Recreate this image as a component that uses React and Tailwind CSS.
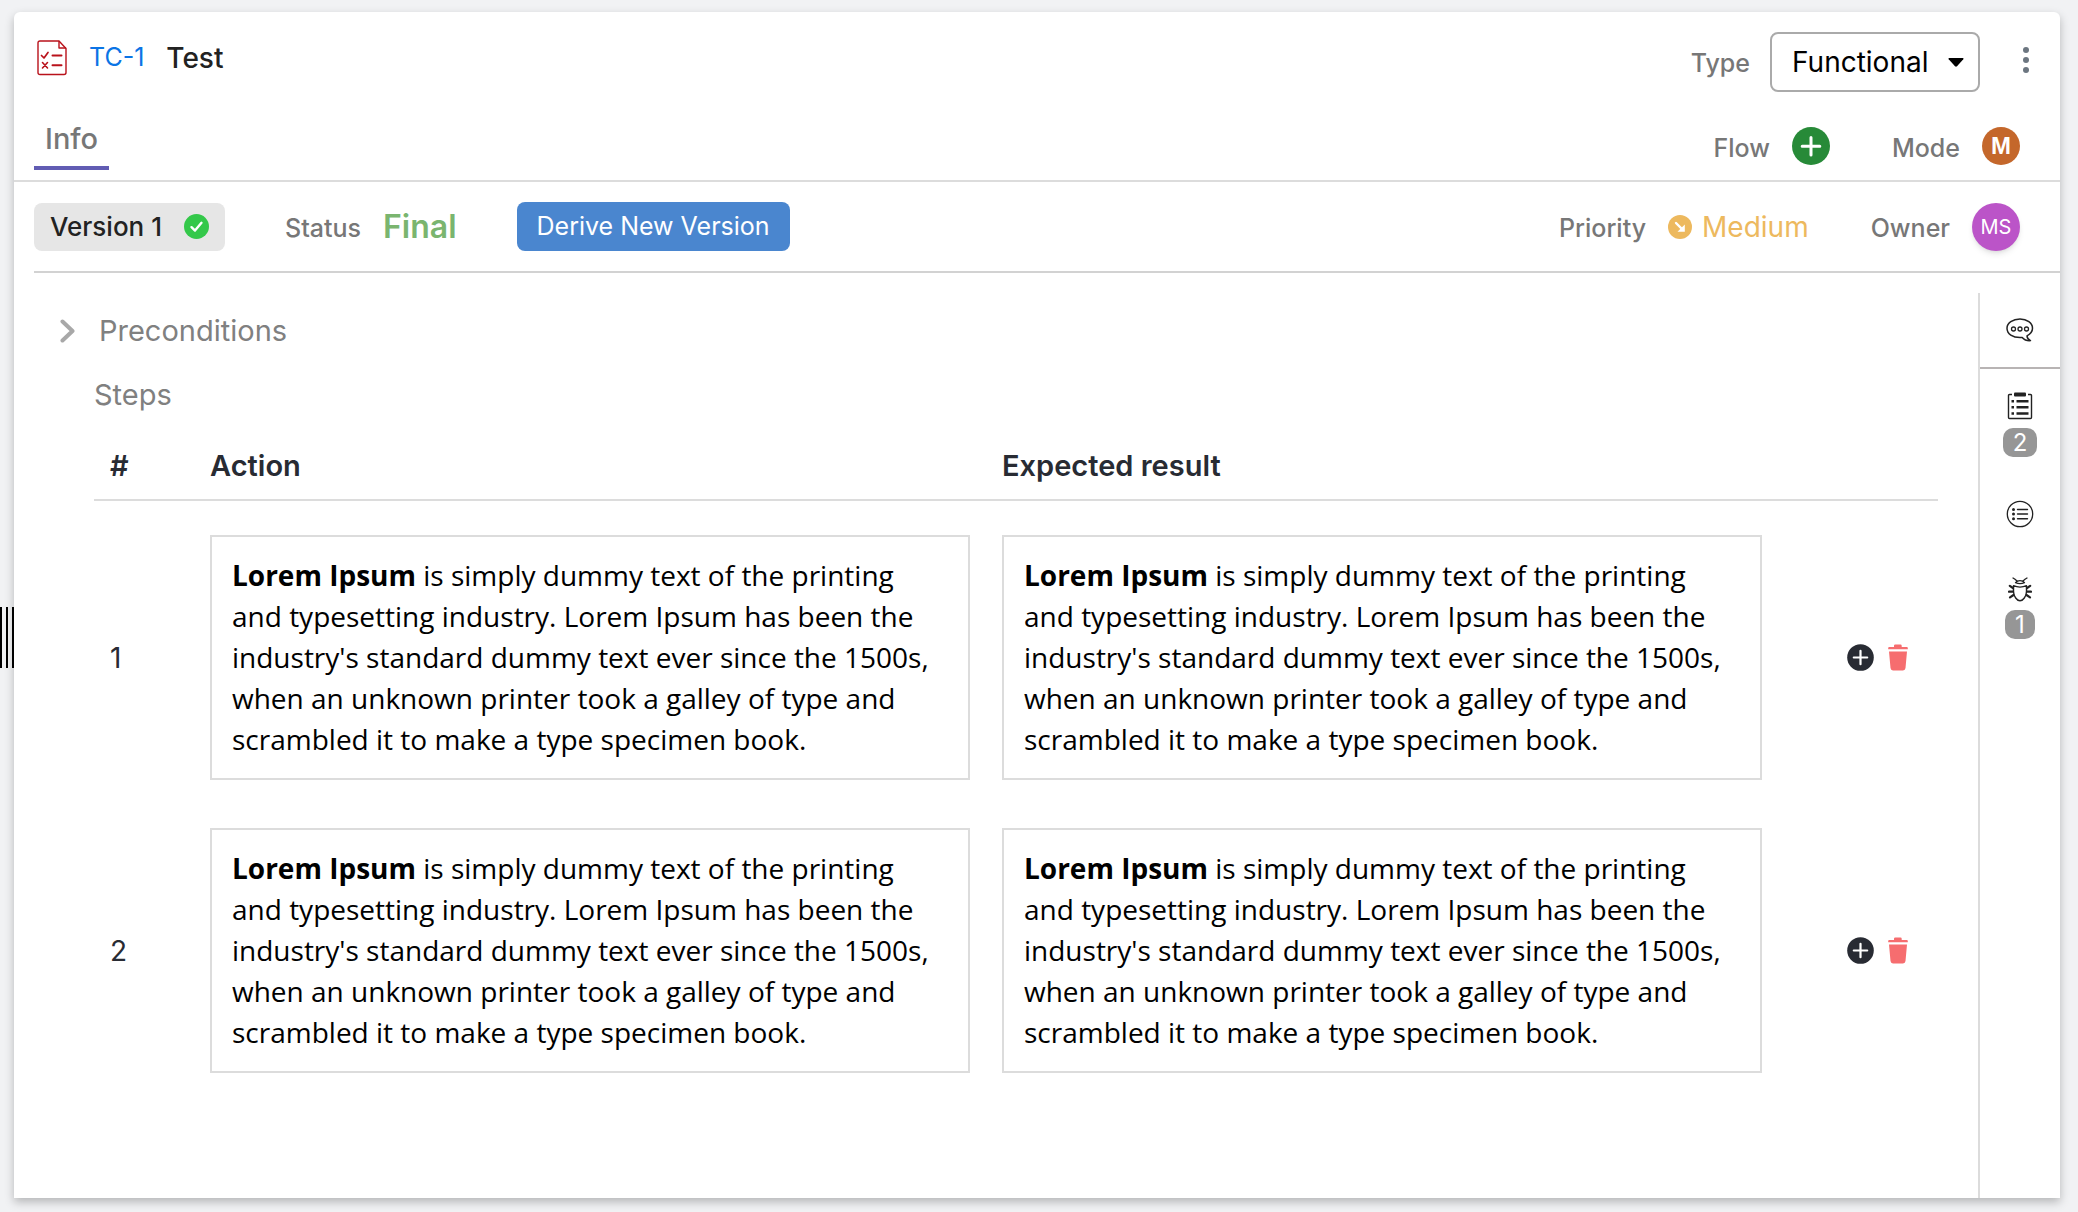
import React, { useState } from "react";

const LABEL = "pt-1 text-[25px] font-medium text-[#777777]";

const TestCaseIcon = () => (
  <svg width="30" height="36" viewBox="0 0 30 36" fill="none" stroke="#b9121b" strokeLinecap="round" strokeLinejoin="round">
    <path d="M3 1H22L29 8.500V32.500Q29 34.500 27 34.500H3Q1 34.500 1 32.500V3Q1 1 3 1Z" strokeWidth="1.400" />
    <path d="M22 1.500V8H28.500" strokeWidth="1.400" />
    <path d="M4.500 15.500L7 18L11 12.500" strokeWidth="1.700" />
    <path d="M5.500 22.500L10.500 28M10.500 22.500L5.500 28" strokeWidth="1.600" />
    <path d="M15.500 15.500H24.500M15.500 25.200H24.500" strokeWidth="2" />
  </svg>
);

const CheckIcon = () => (
  <svg width="25" height="25" viewBox="0 0 25 25" fill="none">
    <circle cx="12.500" cy="12.500" r="12.500" fill="#34c84a" />
    <path d="M7.500 13.200L11 16.600L17.500 8.800" stroke="white" strokeWidth="2.400" strokeLinecap="round" strokeLinejoin="round" />
  </svg>
);

const PriorityIcon = () => (
  <svg width="24" height="24" viewBox="0 0 24 24" fill="none">
    <circle cx="12" cy="12" r="12" fill="#edb95e" />
    <path d="M8 8L13.500 13.500" stroke="white" strokeWidth="2.400" strokeLinecap="round" />
    <path d="M16.800 9.500V16.800H9.500Z" fill="white" />
  </svg>
);

const CommentIcon = () => (
  <svg width="28" height="24" viewBox="0 0 28 24" fill="none" stroke="#222222" strokeWidth="1.500" strokeLinejoin="round">
    <path d="M14 1C21 1 26.500 5 26.500 10.200C26.500 13.500 24.400 16 21 17.800C21 19.800 22.500 21.600 24.500 22.600C21 22.900 18 21.500 16.200 19.400C15.500 19.500 14.700 19.500 14 19.500C6.800 19.500 1 16 1 10.200C1 5 6.800 1 14 1Z" />
    <circle cx="7.500" cy="11" r="2" strokeWidth="1.300" />
    <circle cx="14" cy="11" r="2" strokeWidth="1.300" />
    <circle cx="20.500" cy="11" r="2" strokeWidth="1.300" />
  </svg>
);

const ClipboardIcon = () => (
  <svg width="26" height="28" viewBox="0 0 26 28" fill="none" stroke="#222222">
    <path d="M5 2.500H2.500Q1.500 2.500 1.500 3.500V25.500Q1.500 26.500 2.500 26.500H23.500Q24.500 26.500 24.500 25.500V3.500Q24.500 2.500 23.500 2.500H21" strokeWidth="1.400" />
    <rect x="7" y="0.500" width="12" height="4" rx="1" fill="#222222" stroke="none" />
    <path d="M4.500 9.300H7M4.500 15.300H7M4.500 21.500H7" strokeWidth="2.400" />
    <path d="M9.500 9.300H21.500M9.500 15.300H21.500M9.500 21.500H21.500" strokeWidth="2.400" />
  </svg>
);

const ListCircleIcon = () => (
  <svg width="28" height="28" viewBox="0 0 28 28" fill="none" stroke="#222222">
    <circle cx="14" cy="14" r="12.700" strokeWidth="1.300" />
    <path d="M11.500 9.500H21.500M11.500 14H21.500M11.500 18.700H21.500" strokeWidth="1.400" strokeLinecap="round" />
    <g fill="#222222" stroke="none">
      <circle cx="7.500" cy="9.500" r="1.500" />
      <circle cx="7.500" cy="14" r="1.500" />
      <circle cx="7.500" cy="18.700" r="1.500" />
    </g>
  </svg>
);

const BugIcon = () => (
  <svg width="24" height="25" viewBox="0 0 24 25" fill="none" stroke="#222222" strokeLinecap="round" strokeLinejoin="round">
    <path d="M5 1L7 2.300L9 4M19 1L17 2.300L15 4" strokeWidth="1.300" />
    <path d="M7.500 5.600Q9 3.600 12 3.600Q15 3.600 16.500 5.600Q12 7.600 7.500 5.600Z" strokeWidth="1.300" />
    <path d="M5.500 8.700Q12 11.500 18.500 8.700V14.500Q18.500 18 16.300 21Q14.500 23.700 12 23.700Q9.500 23.700 7.700 21Q5.500 18 5.500 14.500Z" strokeWidth="1.400" />
    <path d="M5 11L1.800 8.800M5 14.700H1M5.500 18L2 20.300M19 11L22.200 8.800M19 14.700H23M18.500 18L22 20.300" strokeWidth="2.200" />
  </svg>
);

const AddIcon = () => (
  <svg width="27" height="27" viewBox="0 0 27 27" fill="none">
    <circle cx="13.500" cy="13.500" r="13.300" fill="#282b33" />
    <path d="M13.500 6.800V20.200M6.800 13.500H20.200" stroke="white" strokeWidth="2.200" strokeLinecap="round" />
  </svg>
);

const TrashIcon = () => (
  <svg width="20" height="27" viewBox="0 0 20 27" fill="#f66d6f">
    <path d="M1.200 3H6V1.800Q6 0.600 7.200 0.600H12.500Q13.700 0.600 13.700 1.800V3H18.800Q19.800 3 19.800 4V5.200H0.200V4Q0.200 3 1.200 3Z" />
    <path d="M1 7.500H19L17.500 24Q17.300 26.400 15 26.400H5Q2.700 26.400 2.500 24Z" />
  </svg>
);

const StepText = () => (
  <div className="border-2 border-[#dcdcdc] px-5 py-[18px] font-['Open_Sans',sans-serif] text-[28px] leading-[41px] text-black">
    <strong className="font-bold">Lorem Ipsum</strong> is simply dummy text of
    the printing and typesetting industry. Lorem Ipsum has been the
    industry's standard dummy text ever since the 1500s, when an unknown
    printer took a galley of type and scrambled it to make a type specimen
    book.
  </div>
);

const Badge = ({ children }) => (
  <span className="flex h-[29px] items-center rounded-[10px] bg-[#969696] px-[10px] text-[24px] text-white">
    {children}
  </span>
);

const App = () => {
  const [type, setType] = useState("Functional");
  const steps = [1, 2];

  return (
    <div className="flex min-h-screen bg-[#f1f2f4] pr-[18px] font-['Inter',sans-serif]">
      {/* Resize handle */}
      <div className="flex w-[14px] shrink-0 items-center pt-[62px]">
        <div className="flex h-[61px] w-full justify-between">
          <span className="w-[2px] bg-black" />
          <span className="w-[2px] bg-black" />
          <span className="w-[2px] bg-black" />
        </div>
      </div>

      <main className="mt-3 mb-[14px] flex min-w-0 flex-1 flex-col rounded-t-md bg-white shadow-[0_4px_10px_rgba(0,0,0,0.25)]">
        {/* Title */}
        <header className="flex items-center justify-between pt-5 pr-[31px] pl-[23px]">
          <div className="flex items-center pb-2">
            <TestCaseIcon />
            <a href="#tc-1" className="ml-[22px] text-[25px] text-[#0b74e5]">
              TC-1
            </a>
            <h1 className="ml-[22px] text-[28px] font-medium text-[#222222]">Test</h1>
          </div>
          <div className="flex items-center">
            <label htmlFor="type" className={LABEL}>
              Type
            </label>
            <div className="relative ml-5">
              <select
                id="type"
                value={type}
                onChange={(e) => setType(e.target.value)}
                className="h-[60px] w-[210px] appearance-none rounded-lg border-2 border-[#aaaaaa] bg-white pl-5 text-[28px] text-black"
              >
                <option>Functional</option>
              </select>
              <svg className="pointer-events-none absolute top-[26px] right-4" width="16" height="9" viewBox="0 0 16 9">
                <path d="M1 0H15Q16 0.300 15.300 1.200L9 8.300Q8 9 7 8.300L0.700 1.200Q0 0.300 1 0Z" />
              </svg>
            </div>
            <button aria-label="More options" className="ml-[43px] pb-1">
              <svg width="6" height="28" viewBox="0 0 6 28" fill="#6c7680">
                <circle cx="3" cy="4" r="3" />
                <circle cx="3" cy="14" r="3" />
                <circle cx="3" cy="24" r="3" />
              </svg>
            </button>
          </div>
        </header>

        {/* Tabs */}
        <div className="flex h-[90px] items-end justify-between border-b-2 border-[#dcdcdc] pr-10 pl-5">
          <button className="mb-[10px] flex h-[52px] items-start justify-center border-b-4 border-[#615cb3] px-[11px] text-[29px] leading-[42px] font-medium text-[#777777]">
            Info
          </button>
          <div className="mb-[13px] flex items-center">
            <span className={LABEL}>Flow</span>
            <button aria-label="Add flow" className="ml-[22px]">
              <svg width="38" height="38" viewBox="0 0 38 38" fill="none">
                <circle cx="19" cy="19" r="19" fill="#278a38" />
                <path d="M19 10.500V28M10.200 19.300H27.800" stroke="white" strokeWidth="3" strokeLinecap="round" />
              </svg>
            </button>
            <span className={`${LABEL} ml-[62px]`}>Mode</span>
            <span className="ml-[22px] flex size-[38px] items-center justify-center rounded-full bg-[#c4672b] font-['Liberation_Sans',sans-serif] text-[24px] font-bold text-white">
              M
            </span>
          </div>
        </div>

        {/* Version bar */}
        <div className="ml-5 flex h-[91px] items-center justify-between border-b-2 border-[#d2d2d2] pr-10">
          <div className="flex items-center">
            <button className="flex h-12 w-[191px] items-center justify-between rounded-lg bg-[#e6e6e6] px-4 text-[26px] font-medium text-[#222222]">
              Version 1
              <CheckIcon />
            </button>
            <span className={`${LABEL} ml-[60px]`}>Status</span>
            <span className="ml-[22px] text-[32px] font-semibold text-[#7ab56f]">Final</span>
            <button className="ml-[60px] h-[49px] rounded-lg bg-[#4a86cf] px-5 text-[25px] text-white">
              Derive New Version
            </button>
          </div>
          <div className="flex items-center">
            <span className={LABEL}>Priority</span>
            <span className="ml-[22px] flex items-center gap-[10px] text-[28px] text-[#edb95e]">
              <PriorityIcon />
              Medium
            </span>
            <span className={`${LABEL} ml-[62px]`}>Owner</span>
            <span className="ml-[22px] flex size-12 items-center justify-center rounded-full bg-[#bb54c8] text-[20px] text-white shadow-md">
              MS
            </span>
          </div>
        </div>

        <div className="flex flex-1 pt-5">
          <section className="min-w-0 flex-1 pt-[17px] pr-10 pb-20 pl-[46px]">
            <button className="flex h-[42px] items-center text-[29px] text-[#808080]">
              <svg width="15" height="24" viewBox="0 0 15 24" fill="none" stroke="#a8a8a8" strokeWidth="4" strokeLinecap="round" strokeLinejoin="round">
                <path d="M2.500 2.500L12.500 12L2.500 21.500" />
              </svg>
              <span className="ml-6">Preconditions</span>
            </button>
            <div className="pl-[34px]">
              <h2 className="mt-[22px] text-[29px] leading-[42px] text-[#808080]">Steps</h2>
              <table className="mt-4 w-full table-fixed text-left text-[#282b33]">
                <thead>
                  <tr className="h-[68px] border-b-2 border-[#dcdcdc] text-[29px]">
                    <th className="w-[116px] pl-4 font-semibold">#</th>
                    <th className="font-semibold">Action</th>
                    <th className="font-semibold">Expected result</th>
                    <th className="w-[144px]" />
                  </tr>
                </thead>
                <tbody>
                  {steps.map((step) => (
                    <tr key={step}>
                      <td className="pt-[34px] pb-[14px] pl-4 text-[28px]">{step}</td>
                      <td className="pt-[34px] pr-8 pb-[14px]">
                        <StepText />
                      </td>
                      <td className="pt-[34px] pr-8 pb-[14px]">
                        <StepText />
                      </td>
                      <td className="pt-[34px] pb-[14px]">
                        <div className="flex items-center justify-end gap-[14px] pr-[30px]">
                          <button aria-label="Add step">
                            <AddIcon />
                          </button>
                          <button aria-label="Delete step">
                            <TrashIcon />
                          </button>
                        </div>
                      </td>
                    </tr>
                  ))}
                </tbody>
              </table>
            </div>
          </section>

          {/* Side rail */}
          <nav className="flex w-[82px] shrink-0 flex-col items-center border-l-2 border-[#dcdcdc]">
            <button aria-label="Comments" className="flex h-[76px] w-full items-center justify-center border-b-2 border-[#b8b4b4]">
              <CommentIcon />
            </button>
            <button aria-label="Executions" className="mt-[23px] flex flex-col items-center gap-2">
              <ClipboardIcon />
              <Badge>2</Badge>
            </button>
            <button aria-label="Requirements" className="mt-[43px]">
              <ListCircleIcon />
            </button>
            <button aria-label="Defects" className="mt-[49px] flex flex-col items-center gap-2">
              <BugIcon />
              <Badge>1</Badge>
            </button>
          </nav>
        </div>
      </main>
    </div>
  );
};

export default App;
